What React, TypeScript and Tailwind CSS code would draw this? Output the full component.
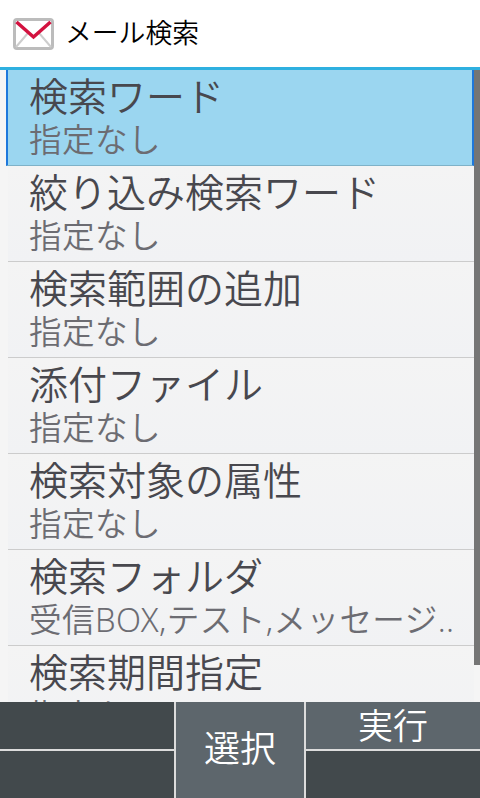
const font = "font-['Noto_Sans','Noto_Sans_CJK_JP',sans-serif]";

const rows = [
  { title: "検索ワード", value: "指定なし" },
  { title: "絞り込み検索ワード", value: "指定なし" },
  { title: "検索範囲の追加", value: "指定なし" },
  { title: "添付ファイル", value: "指定なし" },
  { title: "検索対象の属性", value: "指定なし" },
  { title: "検索フォルダ", value: "受信BOX,テスト,メッセージ.." },
  { title: "検索期間指定", value: "指定なし" },
];

function MailIcon() {
  return (
    <svg width="41" height="32" viewBox="0 0 41 32" className="shrink-0">
      <rect x="1.5" y="1.5" width="38" height="29" rx="2.5" fill="#fff" stroke="#bcbcbc" strokeWidth="3" />
      <path d="M3 29 L15 15 M38 29 L26 15" stroke="#cdcdcd" strokeWidth="2" fill="none" />
      <path d="M3.5 4 L20.5 19 L37.5 4" stroke="#d3123f" strokeWidth="3.5" fill="none" />
    </svg>
  );
}

export default function App() {
  return (
    <div className={`w-[480px] h-[798px] flex flex-col overflow-hidden bg-white ${font}`}>
      <div className="h-[67px] shrink-0 flex items-center pl-[13px] gap-[11px]">
        <MailIcon />
        <span className="text-[26.8px] leading-none text-black font-[350]">メール検索</span>
      </div>
      <div className="h-[3px] shrink-0 bg-[#2eb0e0]" />

      <div className="relative h-[632px] shrink-0 overflow-hidden bg-[#f5f5f5]">
        {/* scrollbar */}
        <div className="absolute right-0 top-0 w-[6px] h-[595px] bg-[#757575] z-10" />
        {rows.map((row, i) => (
          <div key={row.title} className="h-[96px] pl-[8px] pr-[6px]">
            <div
              className={
                i === 0
                  ? "h-full -ml-[2px] pl-[21px] border-l-2 border-r-2 border-b border-[#1e78dc] border-b-[#7fb2c8] bg-[#9bd6f0]"
                  : "h-full pl-[21px] border-b border-[#cccccc] bg-gradient-to-b from-[#f4f4f4] to-[#f1f2f4]"
              }
            >
              <div className="h-[50px] flex items-center text-[39px] leading-none text-[#48484e] font-[350] whitespace-nowrap">
                {row.title}
              </div>
              <div className="mt-[1px] text-[32.6px] leading-[38px] tracking-[0.4px] text-[#6c6c72] font-[350] whitespace-nowrap">
                {row.value}
              </div>
            </div>
          </div>
        ))}
      </div>

      <div className="h-[96px] shrink-0 flex bg-[#dcdcdc] gap-[2px] text-white">
        <div className="w-[174px] flex flex-col gap-[2px]">
          <div className="flex-1 bg-[#42494c]" />
          <div className="flex-1 bg-[#42494c]" />
        </div>
        <div className="w-[128px] pb-[2px] bg-[#5d666c] flex items-center justify-center text-[36px] leading-none font-[350]">
          選択
        </div>
        <div className="flex-1 flex flex-col gap-[2px]">
          <div className="flex-1 bg-[#5d666c] flex items-center justify-center text-[35px] leading-none font-[350]">
            実行
          </div>
          <div className="flex-1 bg-[#42494c]" />
        </div>
      </div>
    </div>
  );
}
